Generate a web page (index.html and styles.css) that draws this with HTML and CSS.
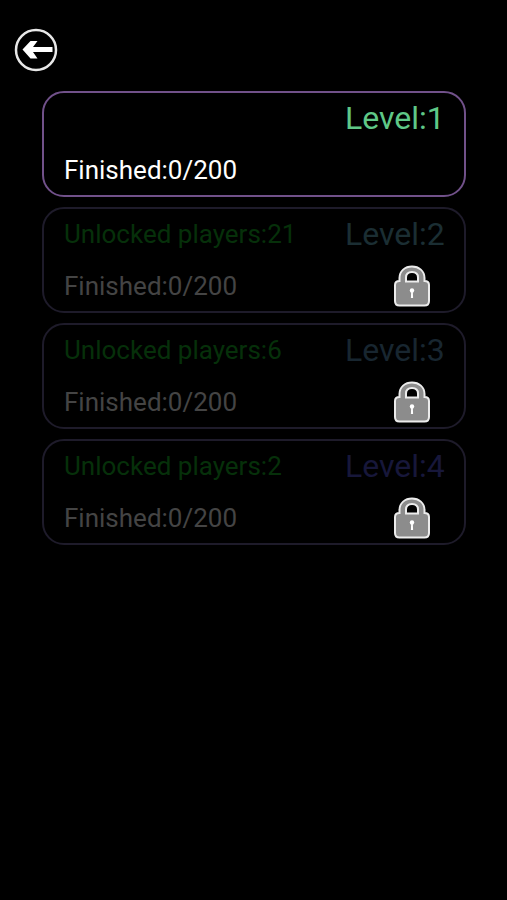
FILE: index.html
```html
<!DOCTYPE html>
<html lang="en">
<head>
  <meta charset="UTF-8">
  <meta name="viewport" content="width=device-width, initial-scale=1.0">
  <title>Levels</title>
  <link rel="stylesheet" href="styles.css">
</head>
<body>
  <!-- lock shape, shared by the locked levels -->
  <svg class="defs" width="0" height="0" aria-hidden="true">
    <symbol id="lock" viewBox="0 0 36 42">
      <path d="M5.500 16V13C5.500 6 11 1.500 18 1.500s12.500 4.500 12.500 11.500v3c3 0 4.500 1.500 4.500 4v16c0 3-1.500 4.500-4.500 4.500h-25C2.500 40.500 1 39 1 36V20c0-2.500 1.500-4 4.500-4z" fill="#8c8c8c" stroke="#ececec" stroke-width="2"/>
      <path d="M12 16.500v-4c0-3.500 2.500-5.500 6-5.500s6 2 6 5.500v4z" fill="#000" stroke="#ececec" stroke-width="2"/>
      <circle cx="18" cy="25.500" r="2.200" fill="#fff"/>
      <path d="M17.200 26h1.600l.3 7h-2.200z" fill="#fff"/>
    </symbol>
  </svg>

  <header class="top">
    <button type="button" class="back" aria-label="Back">
      <svg viewBox="0 0 44 44" aria-hidden="true">
        <circle cx="22" cy="22" r="20" fill="none" stroke="#e8e8e8" stroke-width="2.500"/>
        <path d="M8.500 21.500L16.500 13h7l-4.500 6h19.500v5H19l4.500 6.500h-7z" fill="#fff"/>
      </svg>
    </button>
  </header>

  <main class="levels">
    <button type="button" class="level">
      <span class="name name-1">Level:1</span>
      <span class="finished">Finished:0/200</span>
    </button>

    <button type="button" class="level locked" disabled>
      <span class="unlocked">Unlocked players:21</span>
      <span class="name name-2">Level:2</span>
      <span class="finished">Finished:0/200</span>
      <svg class="lock" role="img" aria-label="Locked"><use href="#lock"/></svg>
    </button>

    <button type="button" class="level locked" disabled>
      <span class="unlocked">Unlocked players:6</span>
      <span class="name name-3">Level:3</span>
      <span class="finished">Finished:0/200</span>
      <svg class="lock" role="img" aria-label="Locked"><use href="#lock"/></svg>
    </button>

    <button type="button" class="level locked" disabled>
      <span class="unlocked">Unlocked players:2</span>
      <span class="name name-4">Level:4</span>
      <span class="finished">Finished:0/200</span>
      <svg class="lock" role="img" aria-label="Locked"><use href="#lock"/></svg>
    </button>
  </main>
</body>
</html>
```
FILE: styles.css
```css
* {
  box-sizing: border-box;
}
body {
  margin: 0;
  min-height: 100vh;
  background: #000;
  color: #fff;
  font-family: Roboto, Arial, sans-serif;
}
.defs {
  display: block;
}
.top {
  padding: 28px 14px 19px;
}
.back {
  display: block;
  width: 44px;
  height: 44px;
  padding: 0;
  border: 0;
  background: none;
  cursor: pointer;
}
.back svg {
  display: block;
  width: 100%;
}
.levels {
  display: flex;
  flex-direction: column;
  gap: 10px;
  padding: 0 41px 0 42px;
}
.level {
  display: grid;
  grid-template-columns: 1fr 100px;
  grid-template-rows: 49px 53px;
  align-items: center;
  padding: 0 19px 0 20px;
  border: 2px solid #71518a;
  border-radius: 22px;
  background: #000;
  color: #fff;
  font-family: inherit;
  font-size: 26px;
  text-align: left;
  cursor: pointer;
}
.locked {
  border-color: #1e1b2a;
  color: #444;
  cursor: default;
}
.name {
  grid-column: 2;
  font-size: 32px;
}
.name-1 {
  color: #5fc887;
}
.name-2 {
  color: #1b2e33;
}
.name-3 {
  color: #182630;
}
.name-4 {
  color: #17173a;
}
.unlocked {
  color: #06300a;
}
.finished {
  grid-column: 1;
  padding-top: 2px;
}
.lock {
  justify-self: end;
  width: 36px;
  height: 42px;
  margin: 2px 15px 0 0;
}
```
